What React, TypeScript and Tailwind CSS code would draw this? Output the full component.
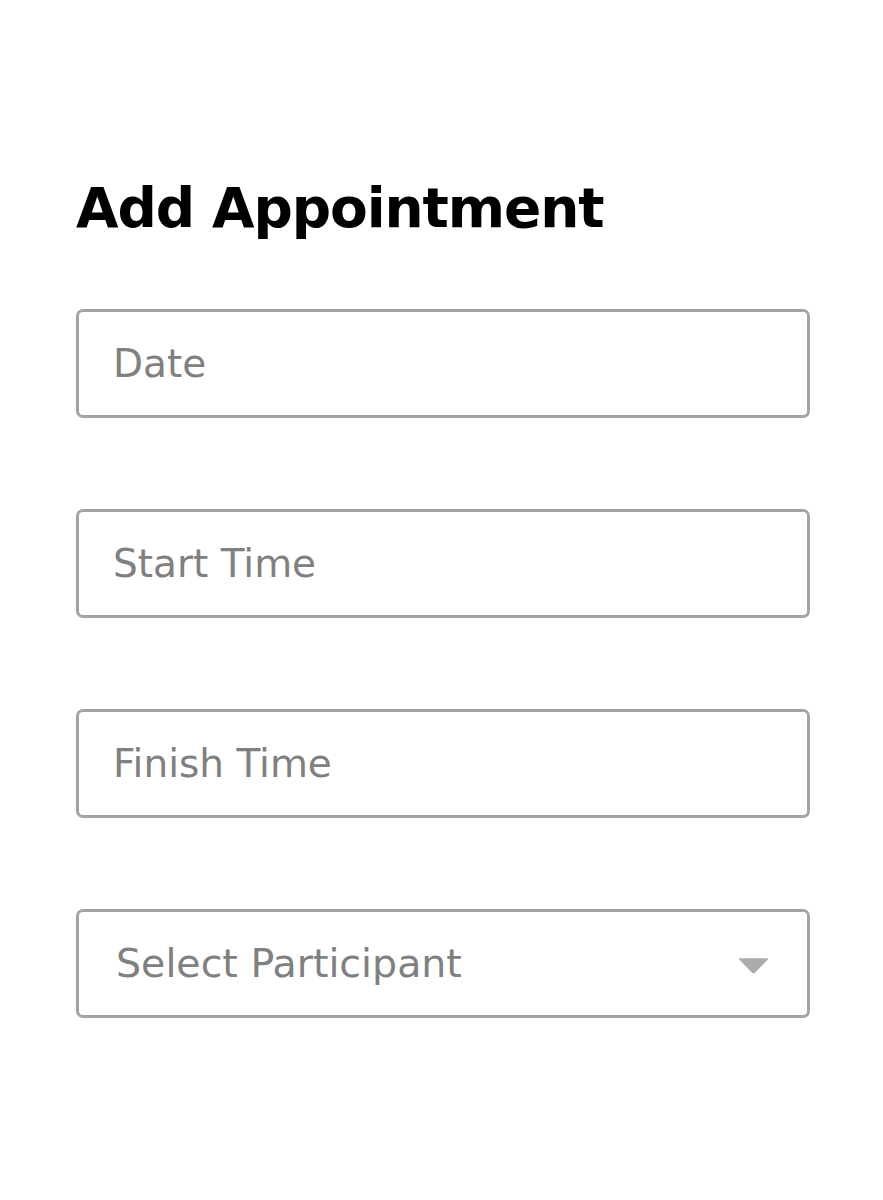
const FIELDS = ["Date", "Start Time", "Finish Time"];

function Caret() {
  return (
    <svg width="33" height="18" viewBox="0 0 33 18" className="pointer-events-none absolute right-[40px] top-1/2 -translate-y-[40%]">
      <path d="M3 1.5 H30 Q32 1.5 30.6 3 L17.9 16 Q16.5 17.4 15.1 16 L2.4 3 Q1 1.5 3 1.5 Z" fill="#ababab" />
    </svg>
  );
}

export default function App() {
  return (
    <div className="min-h-[1200px] bg-white px-[76px] pt-[174px]" style={{ fontFamily: '"DejaVu Sans", sans-serif' }}>
      <h1 className="text-[55px] font-bold leading-[68px] text-black tracking-[-1.1px]">Add Appointment</h1>
      <form className="mt-[67px] flex w-[734px] flex-col gap-[91px]">
        {FIELDS.map((f) => (
          <input
            key={f}
            type="text"
            placeholder={f}
            className="h-[109px] w-full rounded-[7px] border-[3px] border-[#a3a3a3] bg-white px-[34px] text-[39px] text-[#333] outline-none placeholder:text-[#808080]"
          />
        ))}
        <div className="relative">
          <select
            defaultValue=""
            className="h-[109px] w-full appearance-none rounded-[7px] border-[3px] border-[#a3a3a3] bg-white pl-[37px] text-[39.5px] text-[#808080] outline-none"
          >
            <option value="" disabled>
              Select Participant
            </option>
          </select>
          <Caret />
        </div>
      </form>
    </div>
  );
}
